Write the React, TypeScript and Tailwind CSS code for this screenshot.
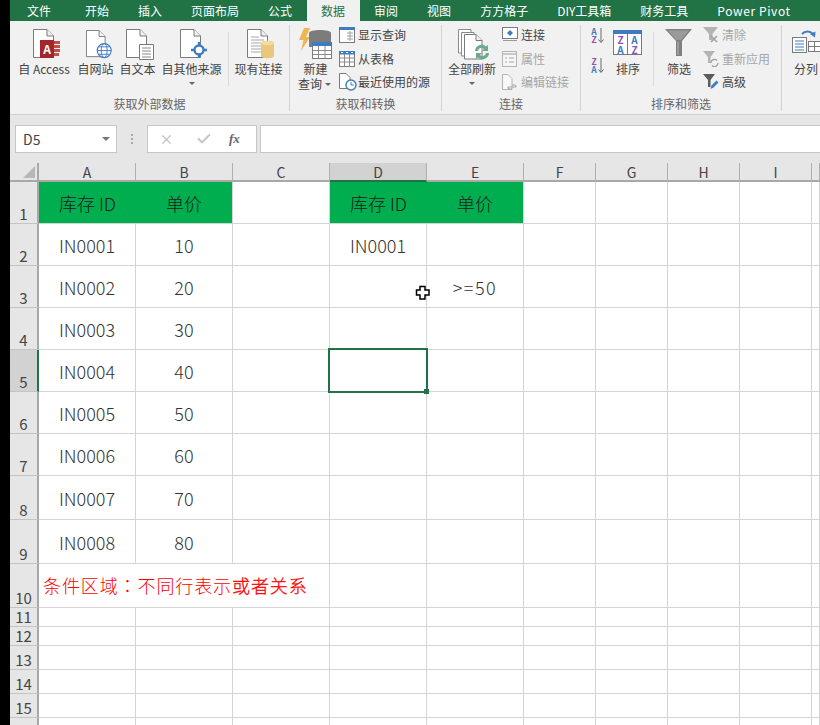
import React from "react";
import { Check, X } from "lucide-react";

const TABS = ["开始", "插入", "页面布局", "公式", "数据", "审阅", "视图", "方方格子", "DIY工具箱", "财务工具", "Power Pivot"];

const COLUMNS = ["A", "B", "C", "D", "E", "F", "G", "H", "I", ""];
const ROWS = [1, 2, 3, 4, 5, 6, 7, 8, 9, 10, 11, 12, 13, 14, 15, 16];
const STOCK = ["IN0001", "IN0002", "IN0003", "IN0004", "IN0005", "IN0006", "IN0007", "IN0008"];

function Doc({ lines }: { lines?: boolean }) {
  return (
    <>
      <path d="M.5.5H14L20.5 7V28.5H.5Z" fill="#fff" stroke="#7a7a7a" />
      <path d="M14 .5V7H20.5" fill="#f1f1f1" stroke="#7a7a7a" />
      {lines && <path d="M4 8H12M4 11H17M4 14H17M4 17H17M4 20H17M4 23H14" stroke="#a8a8a8" />}
    </>
  );
}

function AccessIcon() {
  return (
    <svg width="28" height="31" viewBox="0 0 28 31" className="ml-[6px]">
      <Doc />
      <path d="M19 12H27V15H19ZM19 16H27V19H19ZM19 20H27V23H19ZM19 24H26V27H19Z" fill="#c0504d" />
      <rect x="7" y="11" width="14" height="18" fill="#a4262c" />
      <text x="14" y="25" textAnchor="middle" fontSize="12" fontWeight="700" fill="#fff">A</text>
    </svg>
  );
}

function WebIcon() {
  return (
    <svg width="30" height="31" viewBox="0 0 30 31" className="ml-[8px]">
      <Doc />
      <circle cx="19.5" cy="22" r="7.5" fill="#fff" stroke="#3e7cbf" strokeWidth="1.2" />
      <ellipse cx="19.5" cy="22" rx="3.2" ry="7.5" fill="none" stroke="#3e7cbf" />
      <path d="M12 22H27M13.5 18H25.5M13.5 26H25.5" stroke="#3e7cbf" />
    </svg>
  );
}

function TextIcon() {
  return (
    <svg width="28" height="31" viewBox="0 0 28 31" className="ml-[5px]">
      <Doc />
      <path d="M13.5 15.5H27.5V30.5H13.5Z" fill="#fff" stroke="#7a7a7a" />
      <path d="M16 19H25M16 22H25M16 25H25M16 28H25" stroke="#8a8a8a" />
    </svg>
  );
}

function OtherIcon() {
  return (
    <svg width="28" height="31" viewBox="0 0 28 31" className="ml-[4px]">
      <Doc />
      <circle cx="19" cy="21" r="4.5" fill="#fff" stroke="#3e7cbf" strokeWidth="2.4" />
      <path d="M19 13V17M19 25V29M11 21H15M23 21H27" stroke="#3e7cbf" strokeWidth="2.4" />
    </svg>
  );
}

function ExistingIcon() {
  return (
    <svg width="28" height="31" viewBox="0 0 28 31" className="ml-[5px]">
      <Doc lines />
      <path d="M14 14C14 11 27 11 27 14V27C27 30 14 30 14 27Z" fill="#e9c77b" />
      <ellipse cx="20.5" cy="14" rx="6.5" ry="2.2" fill="#f3dba4" />
    </svg>
  );
}

function NewQueryIcon() {
  return (
    <svg width="35" height="34" viewBox="0 0 35 34" className="-mt-[2px]">
      <path d="M6 1H12L8 10H12L3 24L5.5 13H1Z" fill="#efb550" />
      <path d="M11 6C11 2 33 2 33 6V20H11Z" fill="#7c7c7c" />
      <rect x="14.5" y="15.5" width="19" height="16" fill="#fff" stroke="#7a7a7a" />
      <rect x="14" y="15" width="20" height="4" fill="#3e7cbf" />
      <path d="M14.5 23.5H33.5M14.5 27.5H33.5M20.5 19V31M27 19V31" stroke="#8a8a8a" />
    </svg>
  );
}

function ShowQueryIcon() {
  return (
    <svg width="16" height="16" viewBox="0 0 16 16">
      <rect x=".5" y=".5" width="15" height="15" fill="#fff" stroke="#7a7a7a" />
      <rect x="0" y="0" width="16" height="3" fill="#3e7cbf" />
      <path d="M8 6H14M8 9H14M8 12H14M11 4V14" stroke="#a0a0a0" />
    </svg>
  );
}

function TableIcon() {
  return (
    <svg width="16" height="16" viewBox="0 0 16 16">
      <rect x=".5" y=".5" width="15" height="15" fill="#fff" stroke="#7a7a7a" />
      <rect x="0" y="0" width="16" height="3.5" fill="#3e7cbf" />
      <path d="M0 7H16M0 11H16M5.500 3V16M10.500 3V16" stroke="#8a8a8a" />
      <path d="M2 1.500H4M7 1.500H9M12 1.500H14" stroke="#fff" />
    </svg>
  );
}

function RecentIcon() {
  return (
    <svg width="18" height="18" viewBox="0 0 18 18">
      <path d="M.5.5H7L11 4.500V15.500H.5Z" fill="#fff" stroke="#7a7a7a" />
      <circle cx="12" cy="12" r="5" fill="#fff" stroke="#3e7cbf" strokeWidth="1.4" />
      <path d="M12 9V12H15" fill="none" stroke="#3e7cbf" />
    </svg>
  );
}

function RefreshIcon() {
  return (
    <svg width="32" height="33" viewBox="0 0 32 33" className="ml-[4px]">
      <path d="M.5.5H13V24H.5Z" fill="#fff" stroke="#8a8a8a" />
      <path d="M3.500 3.500H16V27H3.500Z" fill="#fff" stroke="#8a8a8a" />
      <path d="M6.500 5.500H18L24 11.500V30H6.500Z" fill="#fff" stroke="#7a7a7a" />
      <path d="M18 5.500V11.500H24" fill="#f1f1f1" stroke="#7a7a7a" />
      <path d="M17 22A6.500 6.500 0 0 1 28 17.500L30 16V22H24L26 20A3.500 3.500 0 0 0 20 22Z" fill="#6fa98d" />
      <path d="M31 24A6.500 6.500 0 0 1 20 28.500L18 30V24H24L22 26A3.500 3.500 0 0 0 28 24Z" fill="#6fa98d" />
    </svg>
  );
}

function ConnectionIcon() {
  return (
    <svg width="16" height="16" viewBox="0 0 16 16">
      <rect x=".5" y=".5" width="15" height="11" fill="#fff" stroke="#7a7a7a" />
      <path d="M8 3L11 6L8 9L5 6Z" fill="#3e7cbf" />
      <path d="M1 13.500H15" stroke="#9a9a9a" />
    </svg>
  );
}

function PropertyIcon() {
  return (
    <svg width="16" height="16" viewBox="0 0 16 16">
      <rect x=".5" y=".5" width="14" height="15" fill="#f6f6f6" stroke="#b4b4b4" />
      <path d="M1 3H14" stroke="#c8c8c8" strokeWidth="2" />
      <path d="M3 7H5M3 11H5M7 7H12M7 11H12" stroke="#a8a8a8" />
    </svg>
  );
}

function EditLinkIcon() {
  return (
    <svg width="17" height="17" viewBox="0 0 17 17">
      <path d="M.5.5H6L10 4.500V15.500H.5Z" fill="#f8f8f8" stroke="#b4b4b4" />
      <path d="M6 13H14M6 13A2 2 0 0 0 8 15H10M14 13A2 2 0 0 0 12 11H10" fill="none" stroke="#a8a8a8" strokeWidth="1.2" />
    </svg>
  );
}

function SortAscIcon({ flip }: { flip?: boolean }) {
  return (
    <svg width="15" height="17" viewBox="0 0 15 17" className="overflow-visible">
      <text x="4" y="7.500" textAnchor="middle" fontSize="8.500" fontWeight="700" fill={flip ? "#8e52b5" : "#3e7cbf"}>{flip ? "Z" : "A"}</text>
      <text x="4" y="15.500" textAnchor="middle" fontSize="8.500" fontWeight="700" fill={flip ? "#3e7cbf" : "#8e52b5"}>{flip ? "A" : "Z"}</text>
      <path d="M11 1V15M8.500 12.500L11 15.500L13.500 12.500" fill="none" stroke="#6a6a6a" />
    </svg>
  );
}

function SortIcon() {
  return (
    <svg width="30" height="27" viewBox="0 0 30 27" className="mt-[1px]">
      <rect x=".5" y=".5" width="28" height="24" fill="#fff" stroke="#7a7a7a" />
      <rect x="0" y="0" width="29" height="4" fill="#3e7cbf" />
      <path d="M14.500 4V25" stroke="#7a7a7a" />
      <text x="7.500" y="14" textAnchor="middle" fontSize="10" fontWeight="700" fill="#8e52b5">Z</text>
      <text x="7.500" y="23.500" textAnchor="middle" fontSize="10" fontWeight="700" fill="#3e7cbf">A</text>
      <text x="21.500" y="14" textAnchor="middle" fontSize="10" fontWeight="700" fill="#3e7cbf">A</text>
      <text x="21.500" y="23.500" textAnchor="middle" fontSize="10" fontWeight="700" fill="#8e52b5">Z</text>
    </svg>
  );
}

function FunnelIcon() {
  return (
    <svg width="28" height="28" viewBox="0 0 28 28">
      <path d="M0 0H27L17 12V27H11V12Z" fill="#808080" />
      <path d="M3 1.500H24L16 11H11Z" fill="#9a9a9a" />
      <path d="M13 13V26" stroke="#b4b4b4" />
    </svg>
  );
}

function ClearIcon() {
  return (
    <svg width="16" height="16" viewBox="0 0 16 16">
      <path d="M0 0H15L9.500 7V13H6V7Z" fill="#b4b4b4" />
      <path d="M8 9L14 15M14 9L8 15" stroke="#a0a0a0" strokeWidth="1.600" />
    </svg>
  );
}

function ReapplyIcon() {
  return (
    <svg width="16" height="16" viewBox="0 0 16 16">
      <path d="M0 0H12L7.500 6V12H5V6Z" fill="#b4b4b4" />
      <path d="M8 12A3.500 3.500 0 0 1 14 9.500M15 12A3.500 3.500 0 0 1 9 14.500" fill="none" stroke="#a0a0a0" strokeWidth="1.400" />
    </svg>
  );
}

function AdvancedIcon() {
  return (
    <svg width="16" height="16" viewBox="0 0 16 16">
      <path d="M0 0H12L7.500 6V13H5V6Z" fill="#5c5c5c" />
      <path d="M7.500 15L8.500 11.500L13.500 6.500L15.500 8.500L10.500 13.500Z" fill="#3e7cbf" />
    </svg>
  );
}

function SplitIcon() {
  return (
    <svg width="28" height="29" viewBox="0 0 28 29" className="-mt-[1px]">
      <path d="M10 6A7.500 7.500 0 0 1 21 6" fill="none" stroke="#3e7cbf" strokeWidth="2" />
      <path d="M23 9.500L23.500 3.500L18 6Z" fill="#3e7cbf" />
      <rect x=".5" y="9.500" width="14" height="15" fill="#fff" stroke="#7a7a7a" />
      <path d="M3 13H12M3 16H12M3 19H12M3 22H12" stroke="#3e7cbf" />
      <rect x="16.500" y="13.500" width="12" height="10" fill="#fff" stroke="#7a7a7a" />
      <path d="M16 18.500H28M22.500 13V24" stroke="#7a7a7a" />
    </svg>
  );
}

function Caret() {
  return <div className="h-0 w-0 border-x-[3px] border-t-[3px] border-x-transparent border-t-[#666]" />;
}

function BigButton({ width, icon, label, caret }: { width: string; icon: React.ReactNode; label: string; caret?: boolean }) {
  return (
    <div className={`${width} flex flex-col items-center pt-[4px]`}>
      <div className="flex h-[33px] w-full items-start justify-center">{icon}</div>
      <div className="h-[14px] whitespace-nowrap text-center text-[12px] leading-[14px] text-[#444]">{label}</div>
      {caret && (
        <div className="mt-[6px]">
          <Caret />
        </div>
      )}
    </div>
  );
}

function SmallRow({ icon, label, disabled }: { icon: React.ReactNode; label: string; disabled?: boolean }) {
  return (
    <div className="flex h-[20px] items-center">
      <div className="w-[19px] shrink-0">{icon}</div>
      <span className={`whitespace-nowrap text-[12px] leading-[14px] ${disabled ? "text-[#a6a6a6]" : "text-[#444]"}`}>{label}</span>
    </div>
  );
}

function Group({ width, label, padding, children }: { width: string; label?: string; padding: string; children: React.ReactNode }) {
  return (
    <div className={`${width} flex shrink-0 flex-col border-r border-[#d2d2d2]`}>
      <div className={`${padding} flex flex-1`}>{children}</div>
      <div className="h-[14px] text-center text-[12px] leading-[14px] text-[#666]">{label}</div>
    </div>
  );
}

function Divider({ className }: { className: string }) {
  return <div className={`${className} mt-[7px] h-[54px] w-px bg-[#dadada]`} />;
}

function Cell({ row, col }: { row: number; col: string }) {
  const green = row === 1 && ["A", "B", "D", "E"].includes(col);
  const noRight = (row === 1 && (col === "A" || col === "D")) || (row === 10 && (col === "A" || col === "B"));
  let text: string | null = null;
  if (row === 1 && (col === "A" || col === "D")) text = "库存 ID";
  if (row === 1 && (col === "B" || col === "E")) text = "单价";
  if (row >= 2 && row <= 9 && col === "A") text = STOCK[row - 2];
  if (row >= 2 && row <= 9 && col === "B") text = String((row - 1) * 10);
  if (row === 2 && col === "D") text = "IN0001";
  if (row === 3 && col === "E") text = ">=50";

  if (row === 10 && col === "A") {
    return (
      <div className="flex min-w-0 items-center border-b border-[#d4d4d4] bg-white pl-[4px]">
        <span className="relative z-10 whitespace-nowrap text-[18px] font-light tracking-[0.9px] text-[#ff0000]">
          条件区域<span className="[font-family:'Noto_Sans_CJK_TC',sans-serif]">：</span>不同行表示
          <span className="[-webkit-text-stroke:0.3px_#ff0000]">或者关系</span>
        </span>
      </div>
    );
  }

  return (
    <div
      className={`flex min-w-0 items-center justify-center border-b pt-[2px] text-[18px] font-light ${
        green ? "border-[#d4d4d4] bg-[#00ad4f] text-[#1c1c1c]" : "border-[#d4d4d4] bg-white text-[#333]"
      } ${noRight ? "" : "border-r border-r-[#d4d4d4]"} ${text === ">=50" ? "tracking-[1.5px]" : ""}`}
    >
      {text}
    </div>
  );
}

export default function App() {
  return (
    <div className="flex h-[725px] w-[820px] overflow-hidden bg-white [font-family:'Noto_Sans_CJK_SC','Noto_Sans',sans-serif]">
      <div className="w-[10px] shrink-0 bg-black" />
      <div className="flex w-[810px] flex-col">
        <div className="flex h-[21px] shrink-0 items-end bg-[#217346] pl-[2.5px] text-[12px] leading-[16px] text-white">
          <div className="mr-[5px] flex h-[21px] items-center px-[14.5px]">文件</div>
          {TABS.map((tab) => (
            <div
              key={tab}
              className={`flex h-[21px] items-center whitespace-nowrap px-[14.5px] ${
                tab === "数据" ? "bg-[#f1f1f1] text-[#217346]" : ""
              } ${tab === "Power Pivot" ? "tracking-[0.6px]" : ""}`}
            >
              {tab}
            </div>
          ))}
        </div>

        <div className="flex h-[94px] shrink-0 border-b border-[#d0d0d0] bg-[#f1f1f1] pb-[3px] pt-[4px]">
          <Group width="w-[280px]" label="获取外部数据" padding="gap-[6px] pl-[6.5px]">
            <BigButton width="w-[55px]" icon={<AccessIcon />} label="自 Access" />
            <BigButton width="w-[36px]" icon={<WebIcon />} label="自网站" />
            <BigButton width="w-[36px]" icon={<TextIcon />} label="自文本" />
            <BigButton width="w-[60px]" icon={<OtherIcon />} label="自其他来源" caret />
            <Divider className="" />
            <BigButton width="w-[48px]" icon={<ExistingIcon />} label="现有连接" />
          </Group>

          <Group width="w-[152px]" label="获取和转换" padding="gap-[6px] pl-[8px]">
            <div className="flex w-[35px] flex-col items-center pt-[4px]">
              <div className="flex h-[33px] items-start">
                <NewQueryIcon />
              </div>
              <div className="h-[14px] text-[12px] leading-[14px] text-[#444]">新建</div>
              <div className="mt-[1px] flex h-[14px] w-full items-center gap-[3px] text-[12px] leading-[14px] text-[#444]">
                查询
                <Caret />
              </div>
            </div>
            <div className="flex flex-col gap-[3.5px]">
              <SmallRow icon={<ShowQueryIcon />} label="显示查询" />
              <SmallRow icon={<TableIcon />} label="从表格" />
              <SmallRow icon={<RecentIcon />} label="最近使用的源" />
            </div>
          </Group>

          <Group width="w-[139px]" label="连接" padding="gap-[6px] pl-[6px]">
            <BigButton width="w-[48px]" icon={<RefreshIcon />} label="全部刷新" caret />
            <div className="flex flex-col gap-[3.5px]">
              <SmallRow icon={<ConnectionIcon />} label="连接" />
              <SmallRow icon={<PropertyIcon />} label="属性" disabled />
              <SmallRow icon={<EditLinkIcon />} label="编辑链接" disabled />
            </div>
          </Group>

          <Group width="w-[201px]" label="排序和筛选" padding="pl-[9px]">
            <div className="flex w-[15px] flex-col gap-[13px] pt-[2px]">
              <SortAscIcon />
              <SortAscIcon flip />
            </div>
            <div className="ml-[8px]">
              <BigButton width="w-[30px]" icon={<SortIcon />} label="排序" />
            </div>
            <Divider className="ml-[10px]" />
            <div className="ml-[11px]">
              <BigButton width="w-[28px]" icon={<FunnelIcon />} label="筛选" />
            </div>
            <div className="ml-[10px] flex flex-col gap-[3.5px]">
              <SmallRow icon={<ClearIcon />} label="清除" disabled />
              <SmallRow icon={<ReapplyIcon />} label="重新应用" disabled />
              <SmallRow icon={<AdvancedIcon />} label="高级" />
            </div>
          </Group>

          <div className="flex flex-col pl-[10px]">
            <BigButton width="w-[28px]" icon={<SplitIcon />} label="分列" />
          </div>
        </div>

        <div className="flex h-[48px] shrink-0 items-start bg-[#e6e6e6] pl-[5px] pt-[10px]">
          <div className="flex h-[28px] w-[102px] items-center justify-between border border-[#c6c6c6] bg-white pl-[7px] pr-[6px] text-[14px] text-[#444]">
            D5
            <div className="h-0 w-0 border-x-[4px] border-t-[4px] border-x-transparent border-t-[#777]" />
          </div>
          <div className="flex h-[28px] w-[30px] flex-col items-center justify-center gap-[2px]">
            <div className="h-[2px] w-[2px] bg-[#aaa]" />
            <div className="h-[2px] w-[2px] bg-[#aaa]" />
            <div className="h-[2px] w-[2px] bg-[#aaa]" />
          </div>
          <div className="flex h-[28px] w-[110px] items-center border border-[#c6c6c6] bg-white text-[#c4c4c4]">
            <X size={15} strokeWidth={2} className="ml-[11px]" />
            <Check size={16} strokeWidth={3} className="ml-[22px]" />
            <span className="ml-[17px] text-[13px] font-bold italic text-[#666] [font-family:'Liberation_Serif',serif]">fx</span>
          </div>
          <div className="ml-[3px] h-[28px] flex-1 border-y border-l border-[#c6c6c6] bg-white" />
        </div>

        <div className="relative grid flex-1 grid-cols-[29px_97px_97px_97px_97px_97px_72px_72px_72px_72px_8px] grid-rows-[19px_42px_42px_42px_42px_42px_42px_42px_44px_44px_44px_19px_19px_24px_24px_24px_8px] overflow-hidden">
          <div className="relative border-b-2 border-r-2 border-[#a8a8a8] bg-[#e6e6e6]">
            <div className="absolute bottom-[2px] right-[2px] h-0 w-0 border-b-[12px] border-l-[12px] border-b-[#b8b8b8] border-l-transparent" />
          </div>
          {COLUMNS.map((col) => (
            <div
              key={col}
              className={`flex items-center justify-center border-b-2 border-r text-[14px] leading-none text-[#444] ${
                col === "D" ? "border-b-[#217346] border-r-[#b0b0b0] bg-[#d2d2d2]" : "border-b-[#a8a8a8] border-r-[#b0b0b0] bg-[#e6e6e6]"
              }`}
            >
              {col}
            </div>
          ))}

          {ROWS.map((row) => (
            <React.Fragment key={row}>
              <div
                className={`flex items-end justify-center border-b border-r-2 border-b-[#c4c4c4] text-[15px] leading-[19px] text-[#444] ${
                  row === 5 ? "border-r-[#217346] bg-[#d2d2d2]" : "border-r-[#a8a8a8] bg-[#e6e6e6]"
                }`}
              >
                {row === 16 ? "" : row}
              </div>
              {COLUMNS.map((col) => (
                <Cell key={col} row={row} col={col} />
              ))}
            </React.Fragment>
          ))}

          <div className="absolute left-[318px] top-[185px] h-[45px] w-[100px] border-2 border-[#217346]" />
          <div className="absolute left-[414px] top-[226px] h-[5px] w-[5px] bg-[#217346]" />

          <svg className="absolute left-[405px] top-[122px]" width="16" height="16" viewBox="0 0 16 16">
            <path d="M5 1.500H10V5H14V10H10V14H5V10H1.500V5H5Z" fill="#fff" stroke="#000" strokeWidth="1.500" />
          </svg>
        </div>
      </div>
    </div>
  );
}
